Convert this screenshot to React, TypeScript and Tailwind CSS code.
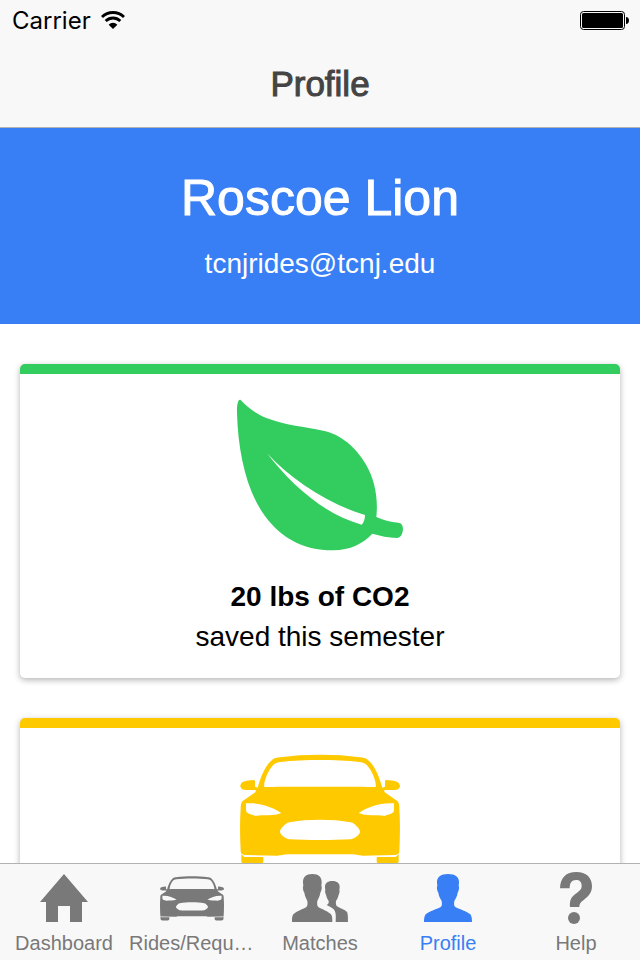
import React from "react";

type IconProps = { className?: string };

function WifiIcon({ className }: IconProps) {
  return (
    <svg viewBox="0 0 72 54" className={className} fill="none" stroke="currentColor" aria-hidden="true">
      <path d="M3 18C21 0 51 0 69 18" strokeWidth="8.5" />
      <path d="M14 30C27 18 45 18 58 30" strokeWidth="8.5" />
      <path d="M36 54L23 41C30 33 42 33 49 41Z" fill="currentColor" stroke="none" />
    </svg>
  );
}

function BatteryIcon({ className }: IconProps) {
  return (
    <svg viewBox="0 0 50 19" className={className} fill="currentColor" aria-hidden="true">
      <rect x="0.5" y="0.5" width="44" height="18" rx="3" fill="none" stroke="currentColor" />
      <rect x="2" y="2" width="41" height="15" rx="1.5" />
      <path d="M46 6C50 6 50 13 46 13Z" />
    </svg>
  );
}

function LeafIcon({ className }: IconProps) {
  return (
    <svg viewBox="48 24 504 465" className={className} fill="currentColor" fillRule="evenodd" aria-hidden="true">
      <path d="M62 30C54 26 50 45 51 70C54 180 77 290 124 362C175 440 245 481 340 481C390 480 430 461 457 431C481 438 506 443 530 444C542 444 548 432 549 417C549 405 544 399 535 398C511 396 488 390 469 381C475 325 465 270 437 222C409 173 362 132 310 122C250 110 200 106 150 88C116 76 88 58 62 30ZM141 190C214 268 318 340 435 375C435 388 431 399 425 404C309 372 210 280 141 190Z" />
    </svg>
  );
}

function CarIcon({ className }: IconProps) {
  return (
    <svg viewBox="30 36 480 342" className={className} fill="currentColor" fillRule="evenodd" aria-hidden="true">
      <path d="M31 137C32 126 44 121 72 120L75 123V140L83 143C91 114 105 76 127 59C133 54 142 53 150 52C225 42 315 42 390 52C398 53 407 54 413 59C435 76 449 114 457 143L465 140V123L468 120C496 121 508 126 510 137C510 145 503 150 490 150H463V156L502 183C507 187 508 198 508 205C511 250 510 290 508 334C508 342 503 345 492 345L398 347C385 347 380 343 367 343H173C160 343 155 347 142 347L48 345C37 345 32 342 32 334C30 290 29 250 32 205C32 198 33 187 38 183L77 156V150H50C38 150 31 145 31 137ZM103 141C160 140 380 140 437 141C440 128 427 93 411 76C406 70 398 67 389 66C315 58 225 58 151 66C142 67 134 70 129 76C113 93 100 128 103 141ZM48 190V211C49 221 61 223 77 228C103 223 131 230 154 219C129 202 91 187 48 190ZM492 190V211C491 221 479 223 463 228C437 223 409 230 386 219C411 202 449 187 492 190ZM178 247C230 237 310 237 362 247C375 250 390 268 390 275C389 284 376 294 363 298C310 301 230 301 177 298C164 294 151 284 150 275C150 268 165 250 178 247Z" />
      <path d="M34 343L43 351H100V362C100 370 95 375 88 375H48C40 375 34 370 34 362ZM506 343L497 351H440V362C440 370 445 375 452 375H492C500 375 506 370 506 362Z" />
    </svg>
  );
}

function HomeIcon({ className }: IconProps) {
  return (
    <svg viewBox="0 0 48 48" className={className} fill="currentColor" aria-hidden="true">
      <path d="M24 0L48 28H42V48H30V32H18V48H6V28H0Z" />
    </svg>
  );
}

function PersonIcon({ className }: IconProps) {
  return (
    <svg viewBox="0 0 144 144" className={className} fill="currentColor" aria-hidden="true">
      <path d="M72 0C94 0 106 9 105 26L104 36C107 40 104 52 101 56C99 68 95 74 91 81C90 90 89 95 94 99C108 107 128 111 139 121C143 126 144 134 144 144H0C0 134 1 126 5 121C16 111 36 107 50 99C55 95 54 90 53 81C49 74 45 68 43 56C40 52 37 40 40 36L39 26C38 9 50 0 72 0Z" />
    </svg>
  );
}

function PeopleIcon({ className }: IconProps) {
  return (
    <svg viewBox="0 0 168 144" className={className} fill="currentColor" aria-hidden="true">
      <path d="M61 0C80 0 90 9 89 26L88 36C91 40 88 52 85 56C83 68 79 74 76 81C75 90 75 95 79 99C91 107 108 111 117 121C121 126 121 134 121 144H0C0 134 0 126 4 121C13 111 31 107 43 99C47 95 47 90 46 81C43 74 39 68 37 56C34 52 31 40 34 36L33 26C32 9 42 0 61 0Z" />
      <path d="M121 21C136 21 144 28 143 41L142 48C144 51 142 59 140 62C138 71 135 76 132 81C131 89 132 94 135 97C145 104 158 106 165 114C168 119 168 134 168 144H131C132 126 132 114 125 106C119 100 112 98 104 93C109 91 111 87 110 81C107 76 104 71 102 62C100 59 98 51 100 48L99 41C98 28 106 21 121 21Z" />
    </svg>
  );
}

function HelpIcon({ className }: IconProps) {
  return (
    <svg viewBox="0 0 96 156" className={className} fill="currentColor" aria-hidden="true">
      <path d="M0 49C1 17 18 0 49 0C79 0 96 17 96 42C96 62 86 72 72 83C61 91 58 96 58 105H30C28 84 34 75 47 65C59 56 65 52 65 41C65 30 59 24 48 24C35 24 29 33 29 49Z" />
      <circle cx="42" cy="138" r="18" />
    </svg>
  );
}

const tabs = [
  { label: "Dashboard", href: "#dashboard", icon: <HomeIcon className="size-12" /> },
  { label: "Rides/Requests", href: "#rides", icon: <CarIcon className="w-16 h-[46px]" /> },
  { label: "Matches", href: "#matches", icon: <PeopleIcon className="w-14 h-12" /> },
  { label: "Profile", href: "#profile", icon: <PersonIcon className="size-12" />, active: true },
  { label: "Help", href: "#help", icon: <HelpIcon className="w-8 h-[52px]" /> },
];

function StatCard({
  accent,
  icon,
  value,
  caption,
}: {
  accent: string;
  icon: React.ReactNode;
  value: string;
  caption: string;
}) {
  return (
    <section
      className={`${accent} flex flex-col items-center rounded-[5px] border-t-10 bg-white pt-6 pb-[21px] shadow-[0_2px_6px_rgba(0,0,0,0.3)]`}
    >
      {icon}
      <p className="mt-6 text-center text-[28px] leading-10 text-black">
        <strong className="block font-bold">{value}</strong>
        {caption}
      </p>
    </section>
  );
}

function App() {
  return (
    <div className="flex h-screen flex-col bg-white font-['Liberation_Sans',Arial,sans-serif]">
      <header className="shrink-0 border-b border-[#b2b2b2] bg-[#f8f8f8]">
        <div className="flex h-10 items-center justify-between pr-[10px] pl-3 text-black">
          <div className="flex items-center gap-[10px]">
            <span className="pt-px font-['Inter',sans-serif] text-2xl leading-10">Carrier</span>
            <WifiIcon className="w-6 h-[18px]" />
          </div>
          <BatteryIcon className="w-[50px] h-[19px]" />
        </div>
        <h1 className="text-center text-[35px] leading-[87px] font-normal text-[#444] [-webkit-text-stroke:1px_#444]">
          Profile
        </h1>
      </header>

      <main className="min-h-0 flex-1 overflow-y-auto [scrollbar-width:none]">
        <div className="bg-[#387ef5] py-10 text-center text-white">
          <h2 className="text-[50px] leading-[60px] font-normal [-webkit-text-stroke:1px_white]">Roscoe Lion</h2>
          <p className="mt-4 text-[28px] leading-10">tcnjrides@tcnj.edu</p>
        </div>
        <div className="flex flex-col gap-10 px-5 py-10">
          <StatCard
            accent="border-[#33cd5f]"
            icon={<LeafIcon className="w-[168px] h-[155px] text-[#33cd5f]" />}
            value="20 lbs of CO2"
            caption="saved this semester"
          />
          <StatCard
            accent="border-[#ffc900]"
            icon={<CarIcon className="w-40 h-[114px] text-[#ffc900]" />}
            value="1 ride"
            caption="shared this semester"
          />
        </div>
      </main>

      <nav className="flex shrink-0 border-t border-[#b2b2b2] bg-[#f8f8f8] pt-[6px] pb-[5px]">
        {tabs.map((tab) => (
          <a
            key={tab.label}
            href={tab.href}
            aria-current={tab.active ? "page" : undefined}
            className={`min-w-0 flex-1 ${tab.active ? "text-[#387ef5]" : "text-[#797979]"}`}
          >
            <span className="flex h-14 items-center justify-center">{tab.icon}</span>
            <span className="mt-[5px] block truncate px-px text-center text-xl leading-6">{tab.label}</span>
          </a>
        ))}
      </nav>
    </div>
  );
}

export default App;
